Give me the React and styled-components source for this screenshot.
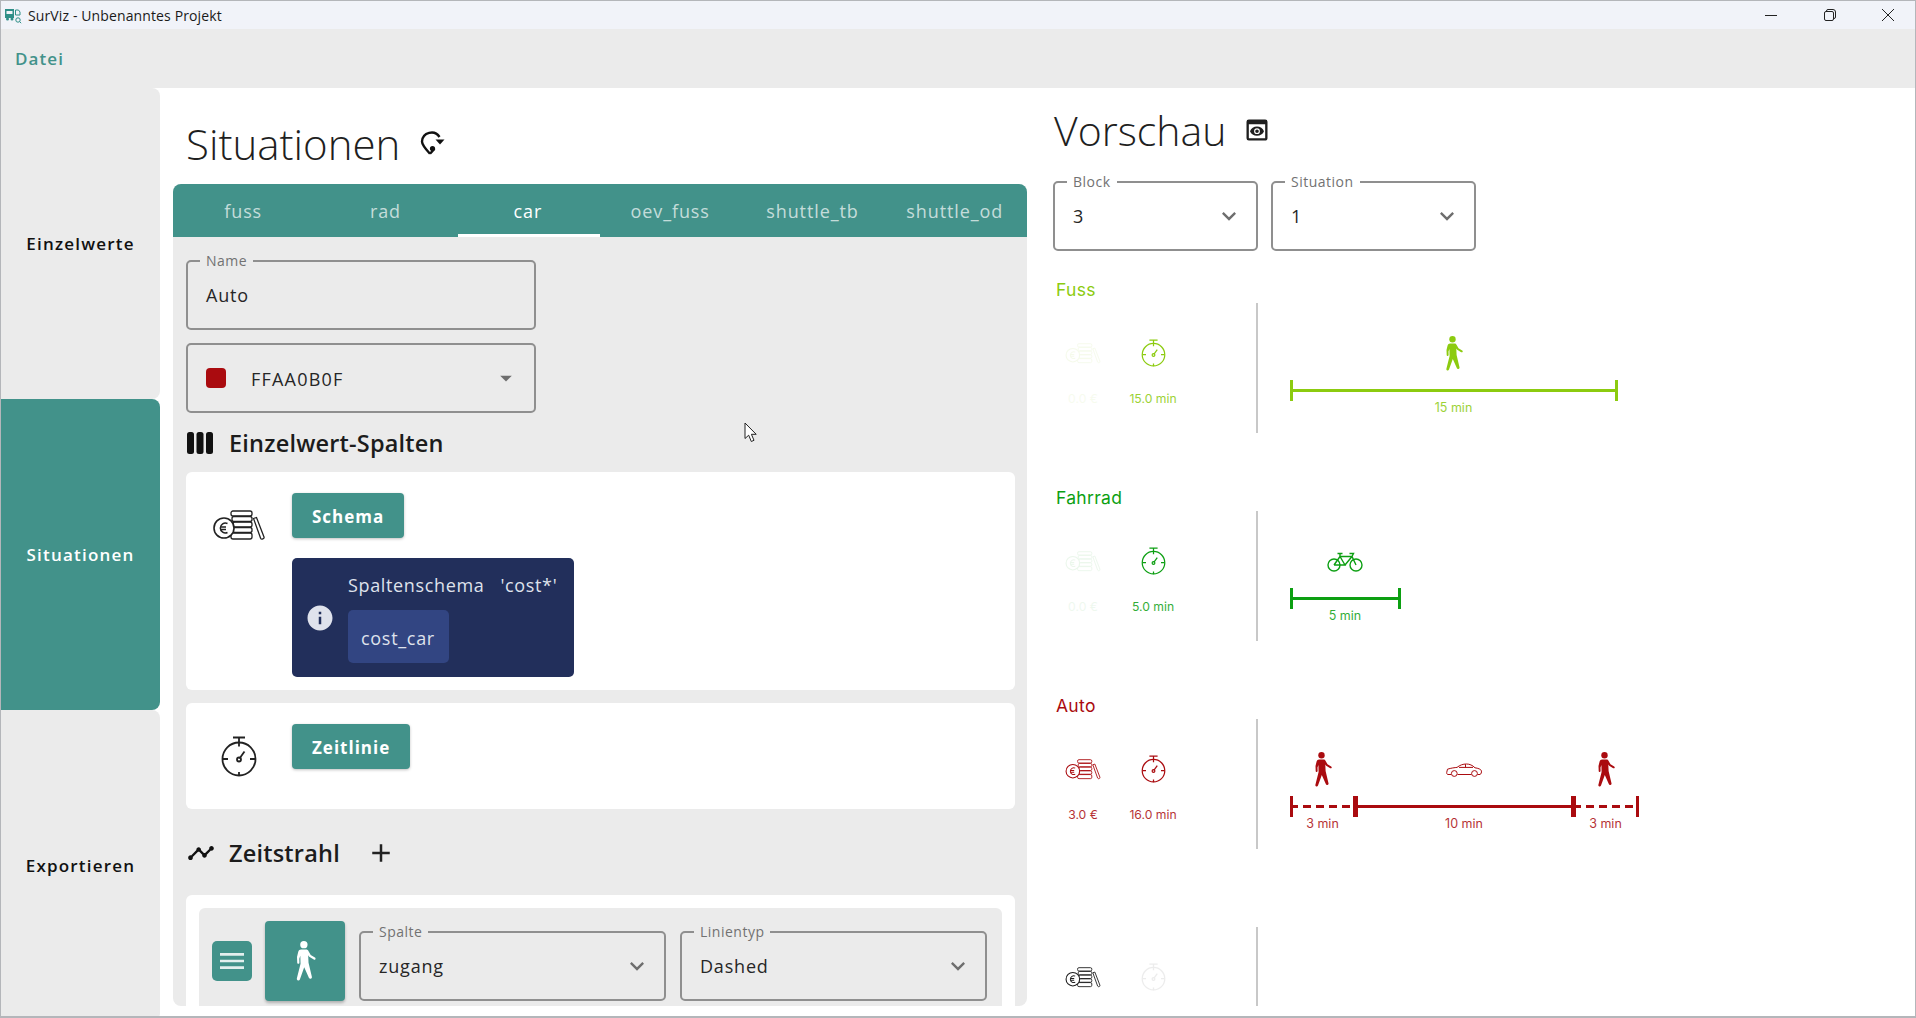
import React from "react";
import styled, { createGlobalStyle } from "styled-components";
import {
  MdAdd,
  MdArrowDropDown,
  MdInfo,
  MdKeyboardArrowDown,
  MdMenu,
  MdPreview,
  MdTimeline,
} from "react-icons/md";

const TEAL = "#42928a";
const GREY = "#ebebeb";

const GlobalStyle = createGlobalStyle`
  html, body {
    margin: 0;
    padding: 0;
    background: white;
  }
  * {
    box-sizing: border-box;
  }
`;

const Window = styled.div`
  position: relative;
  width: 1916px;
  height: 1018px;
  display: flex;
  flex-direction: column;
  overflow: hidden;
  background: white;
  border: 1px solid #b4b6ba;
  border-bottom-width: 2px;
  font-family: "Open Sans", sans-serif;
  color: #1e1e1e;
`;

const TitleBar = styled.div`
  height: 28px;
  flex: none;
  display: flex;
  align-items: center;
  justify-content: space-between;
  background: #f1f3f9;
`;

const TitleLeft = styled.div`
  display: flex;
  align-items: center;
  gap: 6px;
  padding-left: 3px;
  font-size: 14px;
  letter-spacing: 0.12px;
  color: #1a1a1a;
`;

const WindowButtons = styled.div`
  display: flex;
  gap: 46.5px;
  padding-right: 21px;
`;

const WindowButton = styled.div`
  width: 12px;
  height: 28px;
  display: flex;
  align-items: center;
  justify-content: center;
`;

const MenuBar = styled.div`
  height: 59px;
  flex: none;
  display: flex;
  align-items: center;
  padding-left: 14px;
  background: ${GREY};
`;

const MenuItem = styled.span`
  font-size: 17px;
  font-weight: 600;
  letter-spacing: 1.1px;
  color: ${TEAL};
`;

const Body = styled.div`
  flex: 1;
  min-height: 0;
  display: flex;
`;

const Sidebar = styled.nav`
  width: 159px;
  flex: none;
  display: flex;
  flex-direction: column;
  overflow: hidden;
`;

const SideItem = styled.div`
  height: 311px;
  flex: none;
  display: flex;
  align-items: center;
  justify-content: center;
  border-radius: 0 8px 8px 0;
  background: ${(p) => (p.$active ? TEAL : GREY)};
  color: ${(p) => (p.$active ? "white" : "#111")};
  font-size: 17px;
  font-weight: 600;
  letter-spacing: 1.2px;
`;

const Editor = styled.section`
  width: 880px;
  flex: none;
  display: flex;
  flex-direction: column;
  padding: 32px 13px 10px;
`;

const PageTitle = styled.h1`
  display: flex;
  align-items: center;
  gap: ${(p) => p.$gap}px;
  margin: 0;
  height: 48px;
  line-height: 48px;
  font-weight: 300;
  color: #1f1f1f;
`;

const EditorTitle = styled(PageTitle)`
  padding-left: 13px;
  margin-bottom: 16px;
  font-size: 42px;
`;

const Panel = styled.div`
  flex: 1;
  min-height: 0;
  overflow: hidden;
  display: flex;
  flex-direction: column;
  background: ${GREY};
  border-radius: 8px;
`;

const Tabs = styled.div`
  flex: none;
  height: 53px;
  display: flex;
  background: ${TEAL};
`;

const Tab = styled.div`
  flex: 1;
  display: flex;
  align-items: center;
  justify-content: center;
  padding: 3px 2px 0 0;
  font-size: 18px;
  letter-spacing: 0.9px;
  color: ${(p) => (p.$active ? "white" : "rgba(255, 255, 255, 0.7)")};
  border-bottom: 3px solid ${(p) => (p.$active ? "white" : "transparent")};
`;

const PanelBody = styled.div`
  padding: 23px 12px 0 13px;
`;

const Field = styled.div`
  position: relative;
  flex: ${(p) => (p.$width ? "none" : 1)};
  width: ${(p) => (p.$width ? `${p.$width}px` : "auto")};
  height: 70px;
  display: flex;
  align-items: center;
  justify-content: space-between;
  padding: 0 ${(p) => p.$right ?? 14}px 0 18px;
  border: 2px solid #8f8f8f;
  border-radius: 5px;
  font-size: 18px;
  letter-spacing: 0.8px;
  color: #262626;
`;

const FieldLabel = styled.span`
  position: absolute;
  top: -10px;
  left: 12px;
  padding: 0 6px;
  background: ${(p) => p.$bg || GREY};
  font-size: 14px;
  line-height: 18px;
  letter-spacing: 0.5px;
  color: #727272;
`;

const FieldValue = styled.span`
  display: block;
  margin-top: ${(p) => p.$top || 0}px;
`;

const NameRow = styled.div`
  width: 350px;
  margin-bottom: 13px;
`;

const SwatchValue = styled.div`
  display: flex;
  align-items: center;
  gap: 25px;
  font-size: 18px;
  letter-spacing: 1.2px;
`;

const SwatchText = styled.span`
  margin-top: 2px;
`;

const Swatch = styled.span`
  width: 20px;
  height: 20px;
  border-radius: 4px;
  background: #aa0b0f;
`;

const SectionTitle = styled.h2`
  display: flex;
  align-items: center;
  height: 30px;
  margin: ${(p) => p.$top}px 0 ${(p) => p.$bottom}px;
  font-size: 23.5px;
  font-weight: 600;
  letter-spacing: 0.2px;
  color: #1c1c1c;
`;

const SectionIcon = styled.span`
  width: 43px;
  padding-left: 1px;
  display: flex;
  align-items: center;
  color: #111;
`;

const AddIcon = styled.span`
  display: flex;
  margin-left: 26px;
  color: #222;
`;

const Card = styled.div`
  display: flex;
  background: white;
  border-radius: 6px;
  padding: 21px 0 ${(p) => p.$bottom}px;
  margin-bottom: ${(p) => p.$gap || 0}px;
`;

const CardIcon = styled.div`
  width: 106px;
  height: 65px;
  flex: none;
  display: flex;
  align-items: center;
  justify-content: center;
  color: #222;
`;

const TealButton = styled.div`
  display: inline-flex;
  align-items: center;
  height: 45px;
  padding: 2px ${(p) => p.$pad}px 0;
  border-radius: 4px;
  background: ${TEAL};
  color: white;
  font-size: 17px;
  font-weight: 700;
  letter-spacing: 1px;
  box-shadow: 0 1px 3px rgba(0, 0, 0, 0.25);
`;

const Alert = styled.div`
  width: 282px;
  height: 119px;
  margin-top: 20px;
  display: flex;
  align-items: center;
  padding-left: 13px;
  border-radius: 5px;
  background: #222f5b;
  color: #dfe2ec;
`;

const AlertIcon = styled.span`
  display: flex;
  margin-right: 13px;
`;

const AlertBody = styled.div`
  display: flex;
  flex-direction: column;
  align-items: flex-start;
`;

const AlertTitle = styled.div`
  font-size: 18px;
  letter-spacing: 0.65px;
  white-space: pre;
  line-height: 24px;
  margin-bottom: 13px;
`;

const Chip = styled.div`
  height: 53px;
  padding: 3px 14px 0 13px;
  display: flex;
  align-items: center;
  border-radius: 5px;
  background: #324582;
  font-size: 18px;
  letter-spacing: 0.7px;
`;

const TimelineCard = styled.div`
  background: white;
  border-radius: 6px;
  padding: 13px;
`;

const TimelineItem = styled.div`
  display: flex;
  align-items: flex-start;
  gap: 13px;
  padding: 13px 15px 14px 13px;
  border-radius: 6px;
  background: ${GREY};
`;

const Handle = styled.div`
  width: 40px;
  height: 40px;
  flex: none;
  margin-top: 20px;
  display: flex;
  align-items: center;
  justify-content: center;
  border-radius: 5px;
  background: ${TEAL};
  color: rgba(255, 255, 255, 0.85);
`;

const WalkButton = styled.div`
  width: 80px;
  height: 80px;
  flex: none;
  display: flex;
  align-items: center;
  justify-content: center;
  border-radius: 4px;
  background: ${TEAL};
  color: white;
  box-shadow: 0 2px 3px rgba(0, 0, 0, 0.25);
`;

const ItemSelects = styled.div`
  flex: 1;
  margin: 10px 0 0 1px;
  display: flex;
  gap: 14px;
`;

const Preview = styled.section`
  flex: 1;
  min-width: 0;
  display: flex;
  flex-direction: column;
  padding: 18px 0 10px 13px;
`;

const PreviewTitle = styled(PageTitle)`
  margin-bottom: 27px;
  padding-left: 1px;
  font-size: 41px;
`;

const PreviewSelects = styled.div`
  flex: none;
  display: flex;
  gap: 13px;
  margin-bottom: 28px;
`;

const Rows = styled.div`
  flex: 1;
  min-height: 0;
  overflow: hidden;
  font-family: Inter, sans-serif;
`;

const Row = styled.div`
  height: 208px;
  color: ${(p) => p.$color};
`;

const RowLabel = styled.div`
  height: 22px;
  margin-bottom: 2px;
  padding-left: 3px;
  font-size: 17.5px;
  line-height: 22px;
  letter-spacing: 0.3px;
`;

const RowBody = styled.div`
  display: flex;
  height: 130px;
`;

const Metrics = styled.div`
  width: 205px;
  flex: none;
  display: flex;
  gap: 10px;
  border-right: 2px solid #c8c8c8;
`;

const Metric = styled.div`
  width: 60px;
  padding-top: 36px;
  display: flex;
  flex-direction: column;
  align-items: center;
  color: ${(p) => p.$color || "inherit"};
  opacity: ${(p) => (p.$faded ? 0.08 : 1)};
`;

const MetricIcon = styled.div`
  height: 28px;
  display: flex;
  align-items: center;
`;

const MetricValue = styled.div`
  margin-top: 25px;
  font-size: 12.2px;
  line-height: 14px;
  white-space: nowrap;
  opacity: 0.85;
`;

const Timeline = styled.div`
  display: flex;
  margin-left: 32px;
  padding-top: 33px;
`;

const Segment = styled.div`
  display: flex;
  flex-direction: column;
  align-items: center;
  width: ${(p) => p.$width}px;
`;

const SegmentIcon = styled.div`
  height: 35px;
  display: flex;
  align-items: center;
  justify-content: center;
`;

const SegmentLine = styled.div`
  position: relative;
  width: 100%;
  height: 3px;
  margin: 18px 0 9px;
  background: ${(p) =>
    p.$dashed
      ? "repeating-linear-gradient(90deg, currentColor 0 8px, transparent 8px 13px)"
      : "currentColor"};

  &::before,
  &::after {
    content: "";
    position: absolute;
    top: -9px;
    width: 3px;
    height: 21px;
    background: currentColor;
  }
  &::before {
    left: 0;
  }
  &::after {
    right: -1px;
  }
`;

const SegmentText = styled.div`
  font-size: 12.5px;
  line-height: 14px;
  white-space: nowrap;
  opacity: 0.85;
`;

const Cursor = styled.svg`
  position: absolute;
  left: 743px;
  top: 421px;
`;

const AppIcon = () => (
  <svg width="18" height="17" viewBox="0 0 18 17" fill="none">
    <path d="M1 2h9v9H1z" fill="#2f8f88" />
    <path d="M2.5 4h6v3h-6z" fill="#f1f3f9" />
    <circle cx="3.5" cy="12" r="1.5" fill="#2f8f88" />
    <circle cx="8" cy="12" r="1.5" fill="#2f8f88" />
    <path d="M11.5 3h3l1.5 2v3h-4.5z" stroke="#2f8f88" />
    <circle cx="14" cy="13" r="2.2" stroke="#2f8f88" />
    <path d="M15.6 14.6L17.2 16.2" stroke="#2f8f88" />
  </svg>
);

const MinimizeIcon = () => (
  <svg width="12" height="12" viewBox="0 0 12 12">
    <path d="M0 6.5h12" stroke="#222" strokeWidth="1" />
  </svg>
);

const RestoreIcon = () => (
  <svg width="12" height="12" viewBox="0 0 12 12" fill="none" stroke="#222" strokeWidth="1">
    <rect x="0.5" y="2.5" width="9" height="9" rx="1.5" />
    <path d="M2.5 2.5v-.5a1.5 1.5 0 0 1 1.5-1.5h5a2.5 2.5 0 0 1 2.5 2.5v5a1.5 1.5 0 0 1-1.5 1.5" />
  </svg>
);

const CloseIcon = () => (
  <svg width="12" height="12" viewBox="0 0 12 12" stroke="#222" strokeWidth="1">
    <path d="M0 0l12 12M12 0L0 12" />
  </svg>
);

const RoutePinIcon = () => (
  <svg width="25" height="26" viewBox="0 0 25 26" fill="none" stroke="#111" strokeWidth="2.4">
    <path d="M19.500 6A9.500 9.500 0 0 0 2 10.500c0 3.600 3.600 7.400 8 12.300" />
    <path d="M10 22.800c1.500-1.600 3-3.200 4.400-5.200" />
    <circle cx="12.500" cy="17.500" r="2.600" fill="#111" stroke="none" />
    <path d="M15.500 8.500h9L20 13.500z" fill="#111" stroke="none" />
  </svg>
);

const ColumnsIcon = () => (
  <svg width="26" height="22" viewBox="0 0 26 22" fill="currentColor">
    <rect x="0" y="0" width="7" height="22" rx="2.5" />
    <rect x="9.5" y="0" width="7" height="22" rx="2.5" />
    <rect x="19" y="0" width="7" height="22" rx="2.5" />
  </svg>
);

const CostIcon = ({ width = 52, height = 31 }) => (
  <svg width={width} height={height} viewBox="0 0 52 31" fill="none" stroke="currentColor" strokeWidth="1.300">
    <rect x="18" y="1" width="21" height="5" rx="2" />
    <rect x="19" y="6.500" width="20" height="5" rx="2" />
    <rect x="20" y="12" width="19" height="5" rx="2" />
    <rect x="20" y="17.500" width="19" height="5" rx="2" />
    <rect x="18" y="23" width="21" height="6" rx="2" />
    <path d="M40.500 8.500l3-1 7.500 19.500c.6 1.800-2.600 3-3.400 1.200z" />
    <circle cx="11" cy="18" r="10" fill="white" strokeWidth="1.600" />
    <path d="M14.500 13.500a5 5 0 1 0 0 9M7 17h6M7 19.500h6" strokeWidth="1.500" />
  </svg>
);

const ClockIcon = ({ width = 36, height = 41 }) => (
  <svg width={width} height={height} viewBox="0 0 36 41" fill="none" stroke="currentColor" strokeWidth="1.800">
    <circle cx="18" cy="23" r="16.500" />
    <path d="M12 1.500h12M18 1.500v5M18 6.500v4M18 36v4M2 23h5M29 23h5" />
    <path d="M18.500 22.500l5-7" />
    <circle cx="18" cy="23.500" r="2" />
  </svg>
);

const WalkerIcon = ({ width = 19, height = 35 }) => (
  <svg width={width} height={height} viewBox="0 0 19 35" fill="currentColor">
    <circle cx="8.500" cy="3.200" r="3.200" />
    <path d="M6 7.500h4.500c1 0 1.600.5 2 1.200l2 3.600 3.700 2.200c.5.3.7.9.4 1.400-.3.5-.9.6-1.400.3l-4-2.400-.9-1.400.3 6.600 2.900 12.300c.2.8-.2 1.500-1 1.700-.8.2-1.500-.2-1.700-1L8.800 23 5 33.600c-.3.8-1 1.100-1.700.9-.8-.3-1.100-1-.9-1.800L5.600 20 5.400 13l-.9 2.500.1 3.600c0 .5-.4.9-.9.9s-1-.4-1-1L2.500 14l1.100-4.500C4 8.200 4.900 7.500 6 7.500z" />
  </svg>
);

const BikeIcon = () => (
  <svg width="36" height="20" viewBox="0 0 36 20" fill="none" stroke="currentColor" strokeWidth="1.400">
    <circle cx="7" cy="13" r="6" />
    <circle cx="29" cy="13" r="6" />
    <path d="M7 13L13 4.500h12L29 13M13 4.500L18 13H7M25 4.500L18 13M10.500 1.500h5M13 1.500v3M22.500 1.500h4l-1.500 3" />
  </svg>
);

const CarIcon = () => (
  <svg width="36" height="14" viewBox="0 0 36 14" fill="none" stroke="currentColor" strokeWidth="1">
    <path d="M5 11.500H2C1 11.500.6 10.500.7 9.500L1.500 6.200C5 5 9 4.600 11 4.400 14 2 17 1 20.500 1c3 0 6 1.200 8.500 3.800 3 .4 6 1.400 6.400 3 .3 1.400-.2 3.200-1.400 3.700h-2.500M11.500 11.500h14" />
    <path d="M13 4.400h14M19.500 1.200v3.200" />
    <circle cx="8.300" cy="10.500" r="2.900" />
    <circle cx="28.500" cy="10.500" r="2.900" />
  </svg>
);

const CursorIcon = () => (
  <Cursor width="14" height="21" viewBox="0 0 14 21">
    <path d="M1 1v15.500l3.700-3.300 2.600 6.300 2.700-1.200-2.600-6h4.800z" fill="white" stroke="#222" strokeWidth="1" />
  </Cursor>
);

const tabs = ["fuss", "rad", "car", "oev_fuss", "shuttle_tb", "shuttle_od"];

const previewRows = [
  {
    label: "Fuss",
    color: "#8ccb0f",
    cost: "0.0 €",
    time: "15.0 min",
    costFaded: true,
    segments: [{ width: 327, text: "15 min", icon: <WalkerIcon /> }],
  },
  {
    label: "Fahrrad",
    color: "#0c9f12",
    cost: "0.0 €",
    time: "5.0 min",
    costFaded: true,
    segments: [{ width: 110, text: "5 min", icon: <BikeIcon /> }],
  },
  {
    label: "Auto",
    color: "#aa0b0f",
    cost: "3.0 €",
    time: "16.0 min",
    segments: [
      { width: 65, text: "3 min", icon: <WalkerIcon />, dashed: true },
      { width: 218, text: "10 min", icon: <CarIcon /> },
      { width: 65, text: "3 min", icon: <WalkerIcon />, dashed: true },
    ],
  },
  {
    label: "",
    color: "#1e1e1e",
    cost: "",
    time: "",
    timeFaded: true,
    segments: [],
  },
];

function Select({ label, value, width, bg }) {
  return (
    <Field $width={width} $right={13}>
      <FieldLabel $bg={bg}>{label}</FieldLabel>
      <FieldValue $top={-1}>{value}</FieldValue>
      <MdKeyboardArrowDown size={28} color="#6e6e6e" />
    </Field>
  );
}

function PreviewRow({ row }) {
  return (
    <Row $color={row.color}>
      <RowLabel>{row.label}</RowLabel>
      <RowBody>
        <Metrics>
          <Metric $faded={row.costFaded}>
            <MetricIcon>
              <CostIcon width={36} height={21} />
            </MetricIcon>
            <MetricValue>{row.cost}</MetricValue>
          </Metric>
          <Metric $faded={row.timeFaded}>
            <MetricIcon>
              <ClockIcon width={25} height={28} />
            </MetricIcon>
            <MetricValue>{row.time}</MetricValue>
          </Metric>
        </Metrics>
        <Timeline>
          {row.segments.map((s, i) => (
            <Segment key={i} $width={s.width}>
              <SegmentIcon>{s.icon}</SegmentIcon>
              <SegmentLine $dashed={s.dashed} />
              <SegmentText>{s.text}</SegmentText>
            </Segment>
          ))}
        </Timeline>
      </RowBody>
    </Row>
  );
}

export default function App() {
  return (
    <Window>
      <GlobalStyle />
      <TitleBar>
        <TitleLeft>
          <AppIcon />
          SurViz - Unbenanntes Projekt
        </TitleLeft>
        <WindowButtons>
          <WindowButton>
            <MinimizeIcon />
          </WindowButton>
          <WindowButton>
            <RestoreIcon />
          </WindowButton>
          <WindowButton>
            <CloseIcon />
          </WindowButton>
        </WindowButtons>
      </TitleBar>
      <MenuBar>
        <MenuItem>Datei</MenuItem>
      </MenuBar>
      <Body>
        <Sidebar>
          <SideItem>Einzelwerte</SideItem>
          <SideItem $active>Situationen</SideItem>
          <SideItem>Exportieren</SideItem>
        </Sidebar>
        <Editor>
          <EditorTitle $gap={20}>
            Situationen
            <RoutePinIcon />
          </EditorTitle>
          <Panel>
            <Tabs>
              {tabs.map((t) => (
                <Tab key={t} $active={t === "car"}>
                  {t}
                </Tab>
              ))}
            </Tabs>
            <PanelBody>
              <NameRow>
                <Field>
                  <FieldLabel>Name</FieldLabel>
                  <FieldValue>Auto</FieldValue>
                </Field>
              </NameRow>
              <NameRow>
                <Field $right={14}>
                  <SwatchValue>
                    <Swatch />
                    <SwatchText>FFAA0B0F</SwatchText>
                  </SwatchValue>
                  <MdArrowDropDown size={28} color="#6e6e6e" />
                </Field>
              </NameRow>
              <SectionTitle $top={15} $bottom={14}>
                <SectionIcon>
                  <ColumnsIcon />
                </SectionIcon>
                Einzelwert-Spalten
              </SectionTitle>
              <Card $bottom={13} $gap={13}>
                <CardIcon>
                  <CostIcon />
                </CardIcon>
                <div>
                  <TealButton $pad={20}>Schema</TealButton>
                  <Alert>
                    <AlertIcon>
                      <MdInfo size={30} />
                    </AlertIcon>
                    <AlertBody>
                      <AlertTitle>Spaltenschema   'cost*'</AlertTitle>
                      <Chip>cost_car</Chip>
                    </AlertBody>
                  </Alert>
                </div>
              </Card>
              <Card $bottom={20}>
                <CardIcon>
                  <ClockIcon />
                </CardIcon>
                <div>
                  <TealButton $pad={20}>Zeitlinie</TealButton>
                </div>
              </Card>
              <SectionTitle $top={29} $bottom={27}>
                <SectionIcon>
                  <MdTimeline size={28} />
                </SectionIcon>
                Zeitstrahl
                <AddIcon>
                  <MdAdd size={30} />
                </AddIcon>
              </SectionTitle>
              <TimelineCard>
                <TimelineItem>
                  <Handle>
                    <MdMenu size={32} />
                  </Handle>
                  <WalkButton>
                    <WalkerIcon width={22} height={40} />
                  </WalkButton>
                  <ItemSelects>
                    <Select label="Spalte" value="zugang" />
                    <Select label="Linientyp" value="Dashed" />
                  </ItemSelects>
                </TimelineItem>
              </TimelineCard>
            </PanelBody>
          </Panel>
        </Editor>
        <Preview>
          <PreviewTitle $gap={17}>
            Vorschau
            <MdPreview size={28} />
          </PreviewTitle>
          <PreviewSelects>
            <Select label="Block" value="3" width={205} bg="white" />
            <Select label="Situation" value="1" width={205} bg="white" />
          </PreviewSelects>
          <Rows>
            {previewRows.map((row, i) => (
              <PreviewRow key={i} row={row} />
            ))}
          </Rows>
        </Preview>
      </Body>
      <CursorIcon />
    </Window>
  );
}
